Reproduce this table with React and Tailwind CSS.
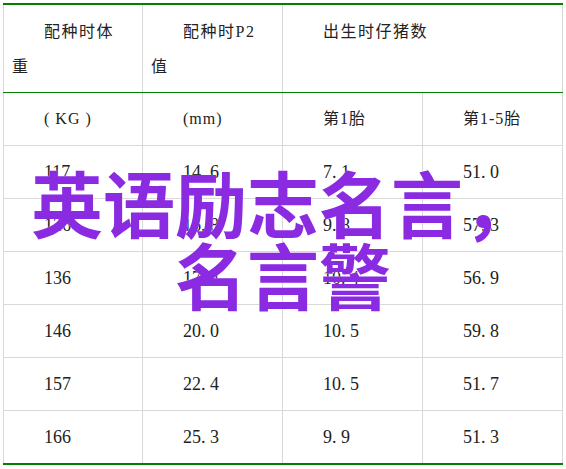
import React from "react";

const rows = [
  ["117", "14.6", "7.1", "51.0"],
  ["126", "16.8", "9.8", "57.3"],
  ["136", "17.4", "10.4", "56.9"],
  ["146", "20.0", "10.5", "59.8"],
  ["157", "22.4", "10.5", "51.7"],
  ["166", "25.3", "9.9", "51.3"],
];

function Num({ v }) {
  return (
    <span>
      {v.split("").map((c, i) =>
        c === "." ? (
          <span key={i} className="inline-block w-[9px]">.</span>
        ) : (
          <span key={i}>{c}</span>
        )
      )}
    </span>
  );
}

const widths = ["w-[139px]", "w-[140px]", "w-[140px]", "w-[141px] border-r"];

export default function App() {
  return (
    <div className="relative w-[566px] h-[469px] bg-white overflow-hidden">
      <div
        className="ml-[3px] mt-[3px] w-[560px] border-t-2 border-b-2 border-[#008000] text-[#222]"
        style={{ fontFamily: '"Liberation Serif", "Noto Sans CJK SC", serif' }}
      >
        {/* header row */}
        <div className="flex h-[88px] border-b border-[#008000] text-[16px] leading-[35px] tracking-[1.5px]">
          <div className="w-[139px] border-l border-[#d9d9d9] pl-2 pt-[9px] indent-8">
            配种时体
            <br />
            <span className="inline-block -ml-8">重</span>
          </div>
          <div className="w-[140px] border-l border-[#d9d9d9] pl-2 pt-[9px] indent-8">
            配种时P2
            <br />
            <span className="inline-block -ml-8">值</span>
          </div>
          <div className="w-[281px] border-l border-r border-[#d9d9d9] pl-2 pt-[9px] indent-8">
            出生时仔猪数
          </div>
        </div>
        {/* unit row */}
        <div className="flex h-[53px] border-b border-[#d9d9d9] text-[16px] tracking-[1px]">
          {["( KG )", "(mm)", "第1胎", "第1-5胎"].map((t, i) => (
            <div
              key={i}
              className={`${widths[i]} border-l border-[#d9d9d9] flex items-center pl-[40px] whitespace-pre`}
            >
              {t}
            </div>
          ))}
        </div>
        {rows.map((r, ri) => (
          <div
            key={ri}
            className={`flex ${ri === rows.length - 1 ? "h-[52px]" : "h-[53px] border-b"} border-[#d9d9d9] text-[18px]`}
          >
            {r.map((v, i) => (
              <div
                key={i}
                className={`${widths[i]} border-l border-[#d9d9d9] flex items-center pl-[40px]`}
              >
                <Num v={v} />
              </div>
            ))}
          </div>
        ))}
      </div>

      <div
        className="absolute left-0 top-[165px] w-full text-center text-[72px] leading-[72px] font-bold text-[#8a2be2] [text-shadow:0_0_1px_#ffffff]"
        style={{ fontFamily: '"Noto Sans CJK SC", sans-serif' }}
      >
        英语励志名言，
        <br />
        名言警
      </div>
    </div>
  );
}
